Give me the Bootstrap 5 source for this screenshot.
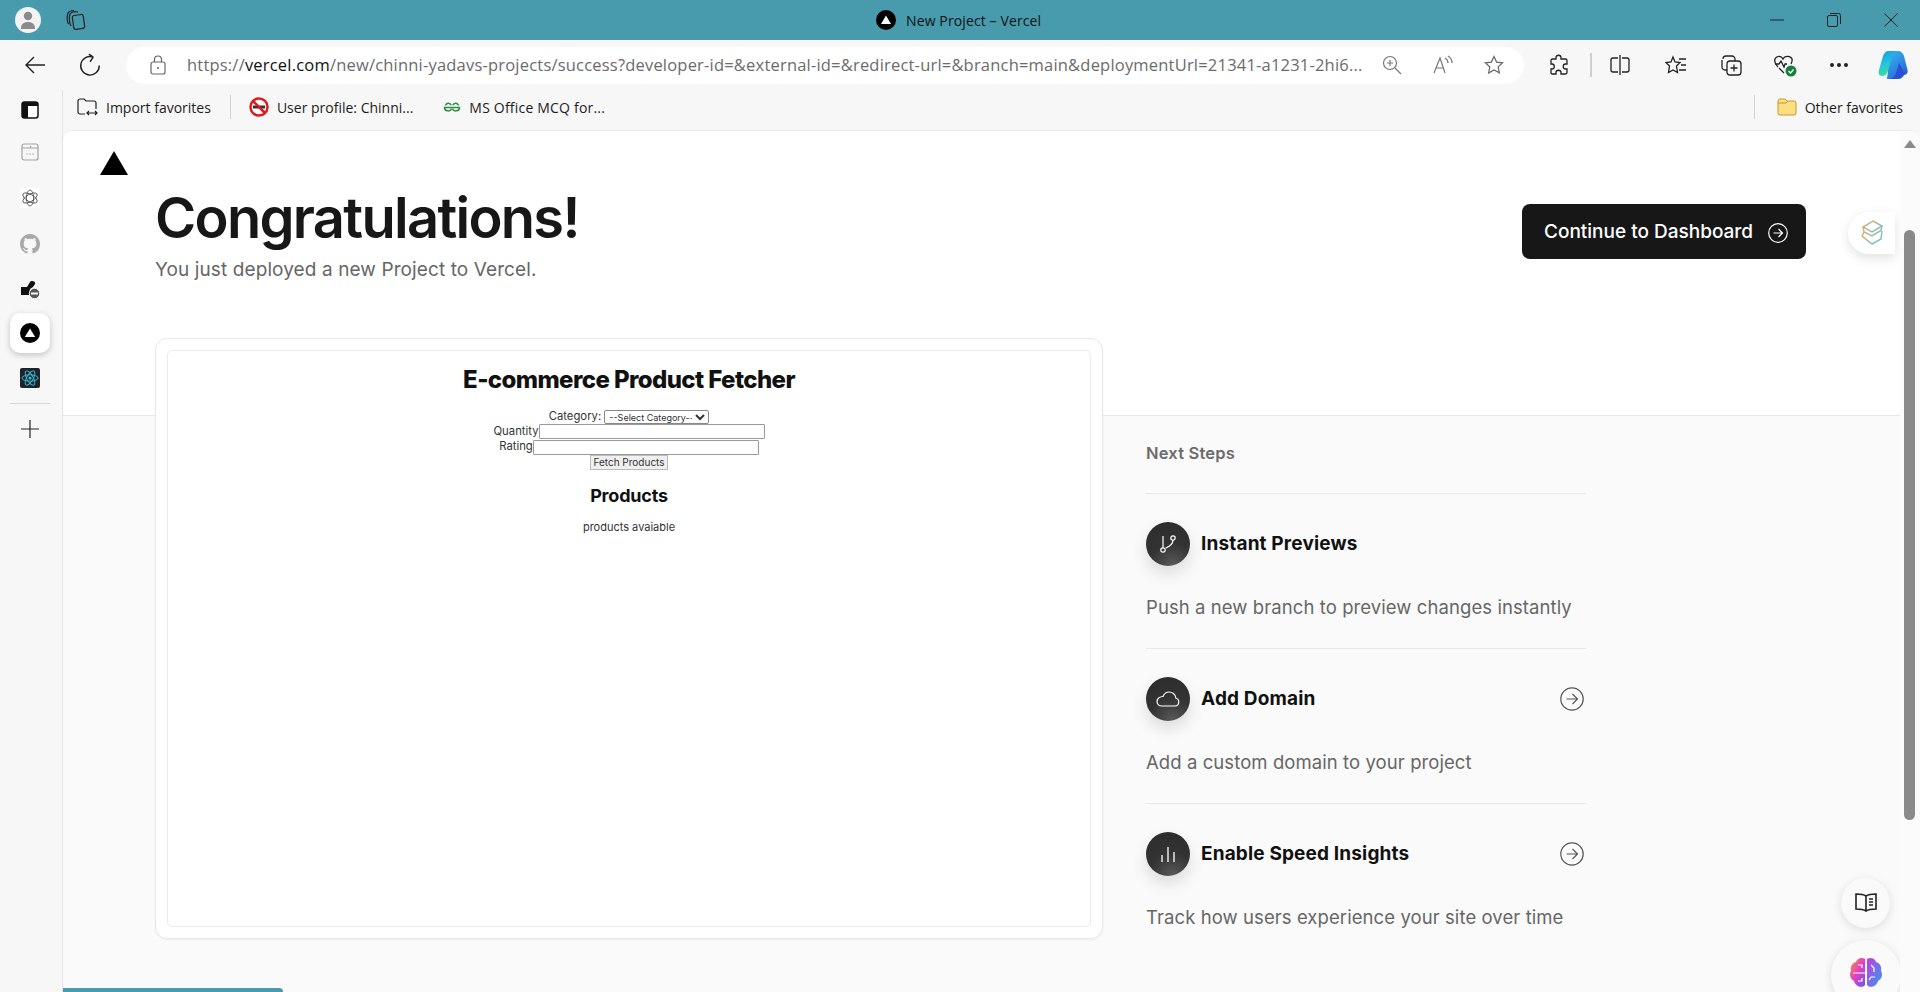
<!DOCTYPE html>
<html lang="en">
<head>
<meta charset="utf-8">
<title>New Project – Vercel</title>
<link href="https://cdn.jsdelivr.net/npm/bootstrap@5.3.3/dist/css/bootstrap.min.css" rel="stylesheet">
<script src="https://cdn.jsdelivr.net/npm/bootstrap@5.3.3/dist/js/bootstrap.bundle.min.js"></script>
<style>
  html, body { height: 100%; overflow: hidden; }
  body { background: #f7f7f7; font-family: "Open Sans", "Liberation Sans", sans-serif; color: #1a1a1a; }
  .app-frame { width: 1920px; height: 992px; }
  svg { display: block; flex: none; }

  .title-strip { height: 40px; background: #479bad; padding-left: 15px; position: relative; }
  .avatar-dot { width: 26px; height: 26px; border-radius: 50%; background: #f3f3f3; }
  .tabs-glyph { margin-left: 24px; }
  .title-middle { position: absolute; left: 876px; top: 0; height: 40px; color: #111; font-size: 14px; gap: 10px; letter-spacing: .12px; }
  .win-controls { margin-left: auto; padding-right: 22px; gap: 43px; }

  .tool-strip { height: 50px; padding-left: 24px; }
  .reload-glyph { margin-left: 32px; }
  .url-pill { width: 1398px; height: 37px; margin-left: 24px; background: #fff; border-radius: 19px; padding-left: 24px; }
  .url-text { font-size: 16.5px; color: #6b6b6b; white-space: nowrap; margin-left: 21px; width: 1180px; overflow: hidden; letter-spacing: .2px; }
  .url-text b { font-weight: 400; color: #111; }
  .pill-icons { gap: 31px; margin-left: 15px; }
  .tool-right { margin-left: 25px; }
  .tool-sep { width: 2px; height: 24px; background: #cfcfcf; margin: 0 18px 0 21px; }
  .gap-35 { margin-left: 35px; }
  .gap-33 { margin-left: 33px; }
  .gap-31 { margin-left: 31px; }
  .gap-30 { margin-left: 30px; }
  .more-dots { width: 18px; gap: 3px; }
  .more-dots span { width: 4px; height: 4px; background: #222; border-radius: 50%; }

  .side-rail { width: 63px; flex: none; padding-right: 3px; border-right: 1px solid #e3e3e3; }
  .rail-slot { width: 40px; height: 40px; margin-bottom: 5px; }
  .rail-slot.is-active { background: #fff; border-radius: 10px; box-shadow: 0 2px 6px rgba(0,0,0,.22); }
  .rail-slot.tight-2 { margin-bottom: 2px; }
  .rail-slot.tight-6 { margin-bottom: 6px; }
  .rail-slot.tight-4 { margin-bottom: 4px; }
  .rail-slot.tight-0 { margin-bottom: 0; }
  .rail-sep { width: 40px; height: 1px; background: #d8d8d8; margin: 5px 0 5px; }

  .fav-strip { height: 40px; font-size: 14px; color: #1c1c1c; padding: 0 17px 6px 14px; }
  .fav-item { gap: 8px; white-space: nowrap; }
  .fav-item.geek-link { margin-left: 30px; }
  .fav-item.geek-link span { letter-spacing: .2px; }
  .fav-sep { width: 1px; height: 24px; background: #d4d4d4; }
  .fav-sep.first-sep { margin: 0 18px 0 19px; }
  .fav-sep.last-sep { margin-right: 22px; }

  .page-shell { height: 862px; background: #fafafa; border-radius: 10px 10px 0 0; position: relative; border-top: 1px solid #ececec; overflow: hidden; }
  .page-font { font-family: Inter, "Liberation Sans", sans-serif; }
  .hero-band { height: 285px; background: #fff; border-bottom: 1px solid #e8e8e8; padding: 20px 0 0 37px; }
  .hero-inner { padding-left: 55px; }
  .hero-title { font-size: 56px; font-weight: 600; letter-spacing: -1.7px; line-height: 66px; color: #171717; margin: 10px 0 0; }
  .hero-sub { font-size: 19px; color: #666; line-height: 28px; margin: 5px 0 0; letter-spacing: .1px; }
  .dash-btn { position: absolute; left: 1459px; top: 73px; width: 284px; height: 55px; background: #171717; color: #fff; border-radius: 8px; font-size: 19px; font-weight: 500; gap: 15px; border: 0; letter-spacing: 0; padding: 2px 0 0 22px; }
  .dash-btn:hover { background: #171717; color: #fff; }

  .lower-row { margin-top: -78px; padding-left: 92px; gap: 43px; }
  .preview-frame { width: 948px; height: 601px; background: #fff; border: 1px solid #e8e8e8; border-radius: 12px; padding: 11px; flex: none; box-shadow: 0 1px 2px rgba(0,0,0,.05); }
  .preview-inner { height: 100%; border: 1px solid #ebebeb; border-radius: 5px; text-align: center; font-size: 11.3px; color: #333; line-height: 15px; padding-top: 13px; }
  .shot-h1 { font-size: 24px; font-weight: 800; color: #111; margin: 0 0 13px; line-height: 32px; letter-spacing: -0.6px; }
  .shot-h2 { font-size: 18px; font-weight: 700; color: #111; margin: 14px 0 12px; line-height: 24px; letter-spacing: -0.2px; }
  .shot-select { font-size: 9px; height: 14px; width: 105px; padding: 0; border: 1px solid #888; border-radius: 2px; background: #fff; color: #333; vertical-align: middle; }
  .shot-input { width: 226px; height: 15px; border: 1px solid #9a9a9a; border-radius: 1px; vertical-align: middle; background: #fff; padding: 0; display: inline-block; }
  .shot-btn { height: 15px; width: 78px; font-size: 10px; line-height: 12px; border: 1px solid #bbb; background: #efefef; color: #333; padding: 0; display: inline-block; }
  .shot-note { font-size: 11px; margin: 0; }

  .next-col { width: 440px; flex: none; padding-top: 93px; }
  .next-head { font-size: 16.5px; font-weight: 600; color: #6b6b6b; line-height: 24px; margin: 10px 0 28px; letter-spacing: .2px; }
  .step-block { border-top: 1px solid #e8e8e8; height: 155px; padding-top: 28px; }
  .step-icon { width: 44px; height: 44px; border-radius: 50%; background: radial-gradient(circle at 60% 100%, #5a5a5a 0, #333 45%, #2b2b2b 100%); box-shadow: 0 8px 16px rgba(0,0,0,.12); flex: none; }
  .step-name { font-size: 19px; font-weight: 700; color: #111; margin-left: 11px; letter-spacing: .15px; }
  .step-go { margin-left: auto; margin-right: 2px; }
  .step-desc { font-size: 18.5px; color: #666; margin: 27px 0 0; line-height: 28px; letter-spacing: .08px; white-space: nowrap; }

  .scroll-track { position: absolute; right: 0; top: 0; bottom: 0; width: 20px; background: #fbfbfb; }
  .scroll-up { position: absolute; left: 4px; top: 9px; }
  .scroll-thumb { position: absolute; left: 4px; top: 99px; width: 11px; height: 590px; background: #8a8a8a; border-radius: 6px; }
  .float-tab { position: absolute; left: 1785px; top: 81px; width: 47px; height: 42px; background: #fff; border-radius: 21px 0 0 21px; box-shadow: 0 4px 12px rgba(0,0,0,.12); }
  .float-book { position: absolute; left: 1778px; top: 747px; width: 49px; height: 50px; border-radius: 50%; background: #fafafa; box-shadow: 0 2px 10px rgba(0,0,0,.12); }
  .float-brain { position: absolute; left: 1768px; top: 809px; width: 70px; height: 70px; border-radius: 50%; background: #fafafa; box-shadow: 0 2px 10px rgba(0,0,0,.12); padding-top: 17px; }
  .progress-sliver { position: absolute; left: 0; bottom: 0; width: 220px; height: 4px; background: #479bad; border-radius: 0 4px 0 0; }
</style>
</head>
<body>
<div class="app-frame d-flex flex-column">

  <div class="title-strip d-flex align-items-center">
    <div class="avatar-dot d-flex align-items-center justify-content-center">
      <svg width="18" height="20" viewBox="0 0 18 20"><circle cx="9" cy="6" r="4.2" fill="#8a8a8a"/><path d="M2 19c0-5 2.5-7 7-7s7 2 7 7z" fill="#8a8a8a"/></svg>
    </div>
    <svg class="tabs-glyph" width="22" height="22" viewBox="0 0 22 22" fill="none" stroke="#222" stroke-width="1.2"><rect x="8" y="6" width="11" height="14" rx="2" transform="rotate(-8 13 13)"/><path d="M6 17C4 14 4 8 5 5c1-1.500 4-3 8-2"/><path d="M3.500 15C2 12 2 7 3 4c1-1.500 3-2.500 6-2.500"/></svg>
    <div class="title-middle d-flex align-items-center">
      <svg width="20" height="20" viewBox="0 0 20 20"><circle cx="10" cy="10" r="10" fill="#000"/><path d="M10 5.500l5 8.500H5z" fill="#fff"/></svg>
      <span>New Project – Vercel</span>
    </div>
    <div class="win-controls d-flex align-items-center">
      <svg width="14" height="14" viewBox="0 0 14 14" stroke="#222" fill="none"><path d="M0 7h14"/></svg>
      <svg width="14" height="14" viewBox="0 0 14 14" stroke="#222" fill="none"><rect x=".5" y="2.500" width="10" height="11" rx="1.500"/><path d="M3 .5h8.500a2 2 0 0 1 2 2V11"/></svg>
      <svg width="14" height="14" viewBox="0 0 14 14" stroke="#222" fill="none"><path d="M.5.5l13 13M13.500.5l-13 13"/></svg>
    </div>
  </div>

  <div class="tool-strip d-flex align-items-center">
    <svg width="22" height="20" viewBox="0 0 22 20" fill="none" stroke="#222" stroke-width="1.4"><path d="M21 10H2M10 2l-8 8 8 8"/></svg>
    <svg class="reload-glyph" width="24" height="24" viewBox="0 0 22 22" fill="none" stroke="#222" stroke-width="1.3"><path d="M14 3.800A8.500 8.500 0 1 0 19.500 11.500M14 3.800L10 1M14 3.800L11 8"/></svg>
    <div class="url-pill d-flex align-items-center">
      <svg width="16" height="20" viewBox="0 0 16 20" fill="none" stroke="#666" stroke-width="1.2"><rect x="1" y="7" width="14" height="12" rx="2"/><path d="M4.500 7V4.500a3.500 3.500 0 0 1 7 0V7"/><circle cx="8" cy="13" r="1" fill="#666" stroke="none"/></svg>
      <div class="url-text">https://<b>vercel.com</b>/new/chinni-yadavs-projects/success?developer-id=&amp;external-id=&amp;redirect-url=&amp;branch=main&amp;deploymentUrl=21341-a1231-2hi6...</div>
      <div class="pill-icons d-flex align-items-center">
        <svg width="20" height="20" viewBox="0 0 20 20" fill="none" stroke="#777" stroke-width="1.2"><circle cx="8" cy="8" r="6.500"/><path d="M8 5v6M5 8h6M13 13l6 6"/></svg>
        <svg width="20" height="20" viewBox="0 0 20 20" fill="none" stroke="#777" stroke-width="1.2"><path d="M1 18L7 3l5 15M3.500 13h7M12 3c2 1 3 3 3 5M15 1c2.500 1.500 4 4 4 7"/></svg>
        <svg width="20" height="20" viewBox="0 0 20 20" fill="none" stroke="#666" stroke-width="1.2"><path d="M10 1.500l2.600 5.600 6 .7-4.400 4.100 1.200 6L10 15l-5.400 3 1.200-6L1.400 7.800l6-.7z"/></svg>
      </div>
    </div>
    <div class="tool-right d-flex align-items-center">
      <svg width="20" height="22" viewBox="0 0 20 22" fill="none" stroke="#222" stroke-width="1.3"><path d="M7 3.500c0-3 5-3 5 0V5h4.500c1 0 1.500.5 1.500 1.500V10h-1.500c-3 0-3 5 0 5H18v3.500c0 1-.5 1.500-1.500 1.500H12v-1.500c0-3-5-3-5 0V20H3.500C2.500 20 2 19.500 2 18.500V15h1c3 0 3-5 0-5H2V6.500C2 5.500 2.500 5 3.500 5H7z"/></svg>
      <div class="tool-sep"></div>
      <svg width="20" height="20" viewBox="0 0 20 20" fill="none" stroke="#222" stroke-width="1.3"><path d="M10 0v20M8 3H3a2 2 0 0 0-2 2v10a2 2 0 0 0 2 2h5M12 3h5a2 2 0 0 1 2 2v10a2 2 0 0 1-2 2h-5"/></svg>
      <svg class="gap-35" width="22" height="20" viewBox="0 0 22 20" fill="none" stroke="#222" stroke-width="1.3"><path d="M8 2l2 5 5 .5-3.500 3.500 1 6.500L8 15l-4.500 2.500 1-6.500L1 7.500 6 7z"/><path d="M14 4h7M16 10h5M14 15h7"/></svg>
      <svg class="gap-33" width="22" height="22" viewBox="0 0 22 22" fill="none" stroke="#222" stroke-width="1.3"><rect x="7" y="7" width="14" height="14" rx="3"/><path d="M14 10.500v7M10.500 14h7M7 16H5a3 3 0 0 1-3-3V6M15 7V5a3 3 0 0 0-3-3H6a3 3 0 0 0-3 3"/></svg>
      <svg class="gap-31" width="24" height="24" viewBox="0 0 24 24" fill="none" stroke="#222" stroke-width="1.3"><path d="M5 14c-3-3-4-5-3-8 1-3 6-4 8 0 2-4 8-3 9 0 .5 2 0 3-1 5M2 11h4l2-3 3 6 1-3h2M6 15l5 5"/><circle cx="18" cy="18" r="5.500" fill="#14803c" stroke="none"/><path d="M15.500 18l2 2 3-3.500" stroke="#fff"/></svg>
      <div class="more-dots gap-33 d-flex"><span></span><span></span><span></span></div>
      <svg class="gap-30" width="30" height="32" viewBox="0 0 30 32"><defs><linearGradient id="cpA" x1=".2" y1="0" x2=".5" y2="1"><stop offset="0" stop-color="#1c9be8"/><stop offset=".55" stop-color="#25c8d8"/><stop offset="1" stop-color="#3fe08f"/></linearGradient><linearGradient id="cpB" x1=".2" y1="0" x2=".8" y2="1"><stop offset="0" stop-color="#35b4ee"/><stop offset=".7" stop-color="#2a7ae0"/><stop offset="1" stop-color="#3b3fc4"/></linearGradient></defs><path d="M10 2h10c3 0 5 2 6 5l3.500 14c.7 3-1 5-4 5h-4c-1 2.500-3 4-6 4H9l1-8z" fill="url(#cpB)"/><path d="M10 2h9c-3 0-4 2-5 5l-4 15c-1 3-3 5-6 5H4c-3 0-4-3-3-6L5 7c1-3 3-5 5-5z" fill="url(#cpA)"/><path d="M21 14l-3 10c-1 3-3 6-7 6h9c3 0 5-2 6-4l1-2z" fill="#2b50d4"/></svg>
    </div>
  </div>

  <div class="d-flex flex-grow-1">
    <div class="side-rail d-flex flex-column align-items-center">
      <div class="rail-slot tight-2 d-flex align-items-center justify-content-center">
        <svg width="18" height="18" viewBox="0 0 18 18"><rect x="1" y="1" width="16" height="16" rx="2.500" fill="#fff" stroke="#111" stroke-width="1.500"/><path d="M1 3.500A2.500 2.500 0 0 1 3.500 1h11A2.500 2.500 0 0 1 17 3.500V5H7v12H3.500A2.500 2.500 0 0 1 1 14.500z" fill="#111"/></svg>
      </div>
      <div class="rail-slot tight-6 d-flex align-items-center justify-content-center">
        <svg width="18" height="18" viewBox="0 0 18 18" fill="none" stroke="#a3a3a3" stroke-width="1.200"><rect x="1" y="1" width="16" height="16" rx="2"/><path d="M1 5h8l1-2M9 5h8"/><path d="M5.500 11h1M8.500 11h1M11.500 11h1" stroke-width="1.600"/></svg>
      </div>
      <div class="rail-slot tight-6 d-flex align-items-center justify-content-center">
        <svg width="20" height="20" viewBox="0 0 20 20" fill="none" stroke="#444" stroke-width=".8"><rect width="20" height="20" fill="#fff" stroke="none"/><ellipse cx="10" cy="10" rx="8" ry="3.600" transform="rotate(30 10 10)"/><ellipse cx="10" cy="10" rx="8" ry="3.600" transform="rotate(90 10 10)"/><ellipse cx="10" cy="10" rx="8" ry="3.600" transform="rotate(150 10 10)"/></svg>
      </div>
      <div class="rail-slot d-flex align-items-center justify-content-center">
        <svg width="20" height="20" viewBox="0 0 16 16"><path fill="#a8a8a8" d="M8 0C3.580 0 0 3.580 0 8c0 3.540 2.290 6.530 5.470 7.590.4.070.55-.17.55-.38 0-.19-.010-.82-.010-1.490-2.010.37-2.530-.49-2.690-.94-.09-.23-.48-.94-.82-1.130-.28-.15-.68-.52-.010-.53.63-.010 1.080.58 1.230.82.72 1.210 1.870.87 2.330.66.070-.52.280-.87.510-1.070-1.780-.2-3.640-.89-3.640-3.950 0-.87.310-1.590.82-2.150-.080-.2-.36-1.020.080-2.120 0 0 .67-.21 2.200.82.640-.18 1.320-.27 2-.27s1.360.09 2 .27c1.530-1.040 2.200-.82 2.200-.82.44 1.100.16 1.920.080 2.120.51.56.82 1.270.82 2.150 0 3.070-1.870 3.750-3.650 3.950.29.25.54.73.54 1.480 0 1.070-.010 1.930-.010 2.200 0 .21.150.46.550.38A8.013 8.013 0 0 0 16 8c0-4.420-3.580-8-8-8z"/></svg>
      </div>
      <div class="rail-slot tight-4 d-flex align-items-center justify-content-center">
        <svg width="20" height="20" viewBox="0 0 20 20"><path d="M1 8h6l3-5c1-2 6-1 5 2l-2 3-3 2-1 6H1z" fill="#111"/><circle cx="14.500" cy="14.500" r="5.200" fill="#555" stroke="#f7f7f7"/><rect x="11" y="13.500" width="7" height="2" fill="#f7f7f7"/></svg>
      </div>
      <div class="rail-slot is-active d-flex align-items-center justify-content-center">
        <svg width="20" height="20" viewBox="0 0 20 20"><circle cx="10" cy="10" r="10" fill="#000"/><path d="M10 5.500l5.200 8.500H4.800z" fill="#fff"/></svg>
      </div>
      <div class="rail-slot tight-0 d-flex align-items-center justify-content-center">
        <svg width="20" height="20" viewBox="0 0 20 20" fill="none" stroke="#35c3de" stroke-width=".9"><rect width="20" height="20" rx="2" fill="#20232a" stroke="none"/><ellipse cx="10" cy="10" rx="8" ry="3.200"/><ellipse cx="10" cy="10" rx="8" ry="3.200" transform="rotate(60 10 10)"/><ellipse cx="10" cy="10" rx="8" ry="3.200" transform="rotate(120 10 10)"/><circle cx="10" cy="10" r="1.500" fill="#35c3de" stroke="none"/></svg>
      </div>
      <div class="rail-sep"></div>
      <div class="rail-slot d-flex align-items-center justify-content-center">
        <svg width="18" height="18" viewBox="0 0 18 18" stroke="#222" stroke-width="1.200"><path d="M9 0v18M0 9h18"/></svg>
      </div>
    </div>

    <div class="flex-grow-1 d-flex flex-column min-w-0">
      <div class="fav-strip d-flex align-items-center">
        <div class="fav-item d-flex align-items-center">
          <svg width="21" height="20" viewBox="0 0 21 20" fill="none" stroke="#222" stroke-width="1.200"><path d="M8 17H3a2 2 0 0 1-2-2V4a2 2 0 0 1 2-2h4l2 2h8a2 2 0 0 1 2 2v6"/><path d="M10 16h10M12 14l-2 2 2 2M18 14l2 2-2 2"/></svg>
          <span>Import favorites</span>
        </div>
        <div class="fav-sep first-sep"></div>
        <div class="fav-item d-flex align-items-center">
          <svg width="20" height="20" viewBox="0 0 20 20"><circle cx="10" cy="10" r="8.500" fill="#fff" stroke="#d81e1e" stroke-width="2.500"/><rect x="4" y="8.500" width="12" height="3" fill="#333"/><path d="M4 4l12 12" stroke="#d81e1e" stroke-width="2.500"/></svg>
          <span>User profile: Chinni...</span>
        </div>
        <div class="fav-item geek-link d-flex align-items-center">
          <svg width="18" height="10" viewBox="0 0 20 12" fill="none" stroke="#2f8d46" stroke-width="1.800"><path d="M10 6.500H1c0 5 7 5.500 8.500 1.500M10 6.500h9c0 5-7 5.500-8.500 1.500M2 4c2-3.500 6-3 7 0M18 4c-2-3.500-6-3-7 0"/></svg>
          <span>MS Office MCQ for...</span>
        </div>
        <div class="ms-auto d-flex align-items-center">
          <div class="fav-sep last-sep"></div>
          <div class="fav-item d-flex align-items-center">
            <svg width="20" height="20" viewBox="0 0 20 20"><path d="M1 16V4a2 2 0 0 1 2-2h5l2 2h7a2 2 0 0 1 2 2v10a2 2 0 0 1-2 2H3a2 2 0 0 1-2-2z" fill="#fcdf80" stroke="#c49a2a"/><path d="M1 6h8l2-2" fill="none" stroke="#c49a2a"/></svg>
            <span>Other favorites</span>
          </div>
        </div>
      </div>

      <div class="page-shell page-font">
        <div class="hero-band">
          <svg width="28" height="24" viewBox="0 0 28 24"><path d="M14 0l14 24H0z" fill="#000"/></svg>
          <div class="hero-inner">
            <h1 class="hero-title">Congratulations!</h1>
            <p class="hero-sub">You just deployed a new Project to Vercel.</p>
          </div>
        </div>
        <button class="dash-btn btn d-flex align-items-center justify-content-start" type="button">
          <span>Continue to Dashboard</span>
          <svg width="20" height="20" viewBox="0 0 20 20" fill="none" stroke="#fff" stroke-width="1.200"><circle cx="10" cy="10" r="9.300"/><path d="M5.500 10h9M10.500 6l4 4-4 4"/></svg>
        </button>

        <div class="lower-row d-flex align-items-start">
          <div class="preview-frame">
            <div class="preview-inner">
              <h2 class="shot-h1">E-commerce Product Fetcher</h2>
              <div>Category: <select class="shot-select"><option>--Select Category--</option></select></div>
              <div>Quantity<span class="shot-input"></span></div>
              <div>Rating<span class="shot-input"></span></div>
              <div><span class="shot-btn">Fetch Products</span></div>
              <h3 class="shot-h2">Products</h3>
              <p class="shot-note">products avaiable</p>
            </div>
          </div>

          <div class="next-col">
            <div class="next-head">Next Steps</div>
            <div class="step-block">
              <div class="d-flex align-items-center">
                <div class="step-icon d-flex align-items-center justify-content-center">
                  <svg width="20" height="20" viewBox="0 0 20 20" fill="none" stroke="#fff" stroke-width="1.200"><circle cx="5" cy="16" r="2.200"/><circle cx="15" cy="4" r="2.200"/><path d="M5 13.800V2M15 6.200c0 4-3 6-7.500 8"/></svg>
                </div>
                <span class="step-name">Instant Previews</span>
              </div>
              <p class="step-desc">Push a new branch to preview changes instantly</p>
            </div>
            <div class="step-block">
              <div class="d-flex align-items-center">
                <div class="step-icon d-flex align-items-center justify-content-center">
                  <svg width="26" height="20" viewBox="0 0 26 20" fill="none" stroke="#fff" stroke-width="1.200"><path d="M7 17h13a4 4 0 0 0 1-7.800C20.500 5 17 3 14 3c-3 0-5 2-6 4.500C4.500 7.500 2 10 2 12.500S4 17 7 17z"/></svg>
                </div>
                <span class="step-name">Add Domain</span>
                <svg class="step-go" width="24" height="24" viewBox="0 0 24 24" fill="none" stroke="#555" stroke-width="1.200"><circle cx="12" cy="12" r="11.200"/><path d="M6.500 12h11M12.500 7l5 5-5 5"/></svg>
              </div>
              <p class="step-desc">Add a custom domain to your project</p>
            </div>
            <div class="step-block">
              <div class="d-flex align-items-center">
                <div class="step-icon d-flex align-items-center justify-content-center">
                  <svg width="20" height="20" viewBox="0 0 20 20" fill="none" stroke="#fff" stroke-width="1.300"><path d="M4 18v-7M10 18V3M16 18V8"/></svg>
                </div>
                <span class="step-name">Enable Speed Insights</span>
                <svg class="step-go" width="24" height="24" viewBox="0 0 24 24" fill="none" stroke="#555" stroke-width="1.200"><circle cx="12" cy="12" r="11.200"/><path d="M6.500 12h11M12.500 7l5 5-5 5"/></svg>
              </div>
              <p class="step-desc">Track how users experience your site over time</p>
            </div>
          </div>
        </div>

        <div class="float-tab d-flex align-items-center justify-content-center">
          <svg width="24" height="26" viewBox="0 0 24 26" fill="none" stroke-width="1.500"><defs><linearGradient id="sdA" x1="0" y1="0" x2="1" y2="1"><stop offset="0" stop-color="#f0a76c"/><stop offset="1" stop-color="#5fc9d8"/></linearGradient></defs><path d="M13 1l9 5-10 6-9-5z" stroke="url(#sdA)"/><path d="M3 7l1 5 8 4 9-5.500L22 6M4 12l-2 4 10 8 9-5 1-8" stroke="url(#sdA)"/></svg>
        </div>
        <div class="float-book d-flex align-items-center justify-content-center">
          <svg width="24" height="24" viewBox="0 0 24 24" fill="none" stroke="#222" stroke-width="1.600"><path d="M12 5C9 3 5 3 2 3v15c3 0 7 0 10 2 3-2 7-2 10-2V3c-3 0-7 0-10 2zM12 5v15"/><path d="M15 8h4M15 11h4M15 14h4"/></svg>
        </div>
        <div class="float-brain d-flex align-items-start justify-content-center">
          <svg width="34" height="32" viewBox="0 0 34 32"><defs><linearGradient id="brA" x1="0" y1="0" x2="1" y2="1"><stop offset="0" stop-color="#f79a2a"/><stop offset=".5" stop-color="#e43ec4"/><stop offset="1" stop-color="#5e5ce6"/></linearGradient><linearGradient id="brB" x1="0" y1="0" x2="1" y2="1"><stop offset="0" stop-color="#c23ee0"/><stop offset="1" stop-color="#2f9cf0"/></linearGradient></defs><path d="M16 2c-3-2-8-1-9 3-4 1-6 5-5 9-2 3-1 8 3 10 1 5 8 8 11 4z" fill="url(#brA)"/><path d="M18 2c3-2 8-1 9 3 4 1 6 5 5 9 2 3 1 8-3 10-1 5-8 8-11 4z" fill="url(#brB)"/><path d="M4 16h12M9 8h4v3M9 24h4v-3M22 8l3 3v4M26 20h-4l-2 3" fill="none" stroke="#fff" stroke-width="1.200"/></svg>
        </div>
        <div class="scroll-track">
          <svg class="scroll-up" width="12" height="8" viewBox="0 0 12 8"><path d="M6 0l6 8H0z" fill="#8a8a8a"/></svg>
          <div class="scroll-thumb"></div>
        </div>
        <div class="progress-sliver"></div>
      </div>
    </div>
  </div>
</div>
</body>
</html>
